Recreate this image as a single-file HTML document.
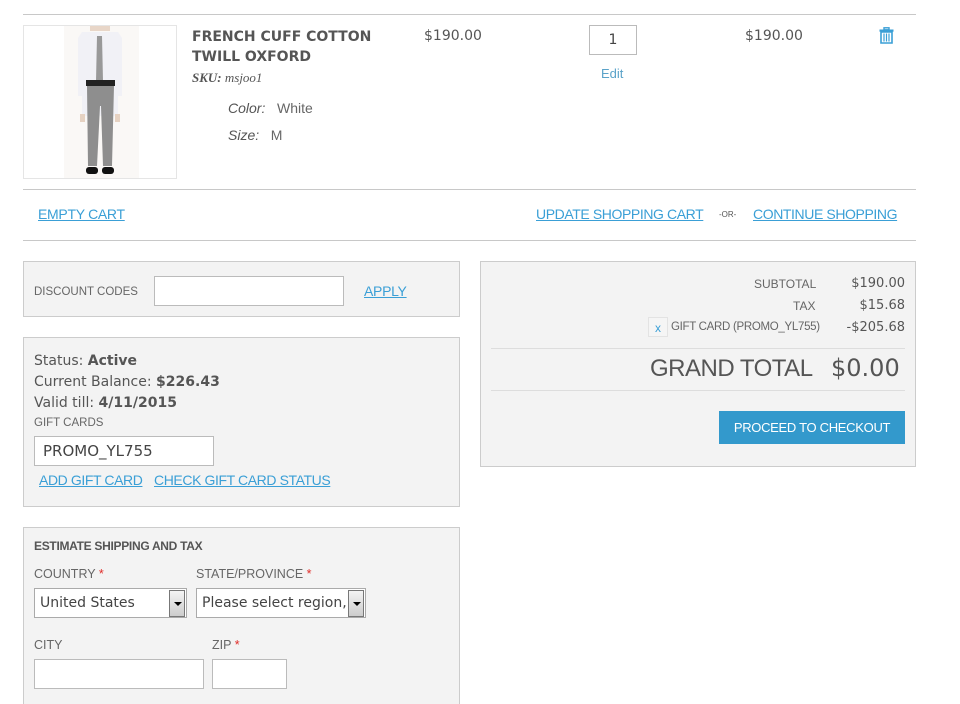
<!DOCTYPE html>
<html><head><meta charset="utf-8"><style>
*{margin:0;padding:0;box-sizing:border-box}
html,body{width:960px;height:704px;overflow:hidden}
body{background:#fff;font-family:"Liberation Sans",sans-serif;color:#555;position:relative}
.a{position:absolute;white-space:nowrap}
.ln{position:absolute;left:23px;width:893px;height:1px;background:#c8c8c8}
.lk{color:#3a9fd6;text-decoration:underline}
.pan{position:absolute;background:#f3f3f3;border:1px solid #ccc}
.inp{position:absolute;background:#fff;border:1px solid #bbb}
.sm{font-size:12px;color:#666}
.mono{font-family:"DejaVu Sans",sans-serif}
.sel{position:absolute;background:#fff;border:1px solid #aaa;font-family:"DejaVu Sans",sans-serif;font-size:14px;color:#444;padding:6px 0 0 5px}
.arr{position:absolute;right:1px;top:1px;width:16px;height:27px;background:linear-gradient(#f4f4f4,#ccc);border:1px solid #777}
.arr:after{content:"";position:absolute;left:4px;top:11px;border:4px solid transparent;border-top:4px solid #000}
.red{color:#e02b27}
</style></head><body>
<div class="ln" style="top:14px"></div>
<div class="a" style="left:23px;top:25px;width:154px;height:154px;border:1px solid #e5e5e5;background:#fff">
<svg width="152" height="152" viewBox="0 0 152 152">
<rect x="40" y="0" width="75" height="152" fill="#faf8f6"/>
<rect x="66" y="0" width="20" height="5" fill="#e8d6c8"/>
<path d="M58 6h36l4 6v58h-4v20h-36v-20h-4v-58z" fill="#f1f1f6"/>
<path d="M73 10h5l1 45h-7z" fill="#999"/>
<rect x="62" y="54" width="29" height="6" fill="#222"/>
<rect x="56" y="88" width="5" height="8" fill="#e6d2c2"/>
<rect x="91" y="88" width="5" height="8" fill="#e6d2c2"/>
<path d="M63 60h27l-2 80h-9l-2-60h-1l-3 60h-9z" fill="#8e8e8e"/>
<rect x="62" y="141" width="12" height="7" rx="3" fill="#111"/>
<rect x="78" y="141" width="12" height="7" rx="3" fill="#111"/>
</svg></div>
<div class="a mono" style="left:192px;top:27px;font-size:14px;font-weight:bold;line-height:20px;color:#555">FRENCH CUFF COTTON<br>TWILL OXFORD</div>
<div class="a" style="left:192px;top:70px;font-family:'Liberation Serif',serif;font-style:italic;font-size:13px;color:#555"><b>SKU:</b> msjoo1</div>
<div class="a" style="left:228px;top:100px;font-size:14px;color:#666"><i style="color:#555">Color:</i>&nbsp;&nbsp;&nbsp;White</div>
<div class="a" style="left:228px;top:127px;font-size:14px;color:#666"><i style="color:#555">Size:</i>&nbsp;&nbsp;&nbsp;M</div>
<div class="a mono" style="left:424px;top:28px;font-size:14px;color:#555">$190.00</div>
<div class="inp" style="left:589px;top:25px;width:48px;height:30px;font-family:'DejaVu Sans';font-size:14px;text-align:center;padding-top:6px;color:#444">1</div>
<div class="a" style="left:601px;top:66px;font-size:13px;color:#5ba3c9">Edit</div>
<div class="a mono" style="left:745px;top:28px;font-size:14px;color:#555">$190.00</div>
<svg class="a" style="left:879px;top:27px" width="15" height="17" viewBox="0 0 15 17"><rect x="5" y="0.8" width="5" height="2" fill="none" stroke="#3a9fd6" stroke-width="1.4"/><rect x="0.5" y="2.5" width="14" height="2.2" fill="#3a9fd6"/><path d="M2 5h11v11H2z" fill="none" stroke="#3a9fd6" stroke-width="1.6"/><path d="M5 6.5v8M7.5 6.5v8M10 6.5v8" stroke="#3a9fd6" stroke-width="1.2"/></svg>
<div class="ln" style="top:189px"></div>
<div class="a lk" style="left:38px;top:206px;font-size:14px;letter-spacing:-0.3px">EMPTY CART</div>
<div class="a lk" style="left:536px;top:206px;font-size:14px;letter-spacing:-0.4px">UPDATE SHOPPING CART</div>
<div class="a" style="left:719px;top:210px;font-size:8px;color:#555">-OR-</div>
<div class="a lk" style="left:753px;top:206px;font-size:14px;letter-spacing:-0.4px">CONTINUE SHOPPING</div>
<div class="ln" style="top:240px"></div>

<div class="pan" style="left:23px;top:261px;width:437px;height:56px"></div>
<div class="a sm" style="left:34px;top:286px;font-size:11.5px">DISCOUNT CODES</div>
<div class="inp" style="left:154px;top:276px;width:190px;height:30px"></div>
<div class="a lk" style="left:364px;top:283px;font-size:14px;letter-spacing:-0.3px">APPLY</div>

<div class="pan" style="left:23px;top:337px;width:437px;height:170px"></div>
<div class="a mono" style="left:34px;top:351px;font-size:14px;line-height:21px;color:#555">Status: <b>Active</b><br>Current Balance: <b>$226.43</b><br>Valid till: <b>4/11/2015</b></div>
<div class="a sm" style="left:34px;top:417px;font-size:11.5px">GIFT CARDS</div>
<div class="inp" style="left:34px;top:436px;width:180px;height:30px;font-family:'DejaVu Sans';font-size:15px;color:#444;padding:5px 0 0 8px">PROMO_YL755</div>
<div class="a lk" style="left:39px;top:472px;font-size:14px;letter-spacing:-0.4px">ADD GIFT CARD</div>
<div class="a lk" style="left:154px;top:472px;font-size:14px;letter-spacing:-0.4px">CHECK GIFT CARD STATUS</div>

<div class="pan" style="left:23px;top:527px;width:437px;height:190px"></div>
<div class="a" style="left:34px;top:539px;font-size:12px;font-weight:bold;color:#555;letter-spacing:-0.3px">ESTIMATE SHIPPING AND TAX</div>
<div class="a sm" style="left:34px;top:567px;font-size:12.5px">COUNTRY <span class="red">*</span></div>
<div class="a sm" style="left:196px;top:567px;font-size:12.5px">STATE/PROVINCE <span class="red">*</span></div>
<div class="sel" style="left:34px;top:588px;width:153px;height:30px">United States<div class="arr"></div></div>
<div class="sel" style="left:196px;top:588px;width:170px;height:30px">Please select region,<div class="arr"></div></div>
<div class="a sm" style="left:34px;top:638px;font-size:12.5px">CITY</div>
<div class="a sm" style="left:212px;top:638px;font-size:12.5px">ZIP <span class="red">*</span></div>
<div class="inp" style="left:34px;top:659px;width:170px;height:30px"></div>
<div class="inp" style="left:212px;top:659px;width:75px;height:30px"></div>

<div class="pan" style="left:480px;top:261px;width:436px;height:206px"></div>
<div class="a" style="left:754px;top:277px;font-size:12px;color:#666">SUBTOTAL</div>
<div class="a mono" style="right:55px;top:276px;font-size:13px;color:#555">$190.00</div>
<div class="a" style="left:793px;top:299px;font-size:12px;color:#666">TAX</div>
<div class="a mono" style="right:55px;top:298px;font-size:13px;color:#555">$15.68</div>
<div class="a" style="left:648px;top:317px;width:20px;height:20px;border:1px solid #e3e3e3;background:#f5f5f5;color:#3a9fd6;font-size:12px;text-align:center;padding-top:3px">x</div>
<div class="a" style="left:671px;top:321px;font-size:11.5px;color:#666;letter-spacing:-0.3px">GIFT CARD (PROMO_YL755)</div>
<div class="a mono" style="right:55px;top:320px;font-size:13px;color:#555">-$205.68</div>
<div class="a" style="left:491px;top:348px;width:414px;height:1px;background:#ddd"></div>
<div class="a" style="left:650px;top:355px;font-size:24px;color:#555;letter-spacing:-0.5px">GRAND TOTAL</div>
<div class="a mono" style="left:831px;top:354px;font-size:24px;color:#555">$0.00</div>
<div class="a" style="left:491px;top:390px;width:414px;height:1px;background:#ddd"></div>
<div class="a" style="left:719px;top:411px;width:186px;height:33px;background:#3399cc;color:#fff;font-size:13px;text-align:center;padding-top:9px;letter-spacing:-0.3px">PROCEED TO CHECKOUT</div>
</body></html>
